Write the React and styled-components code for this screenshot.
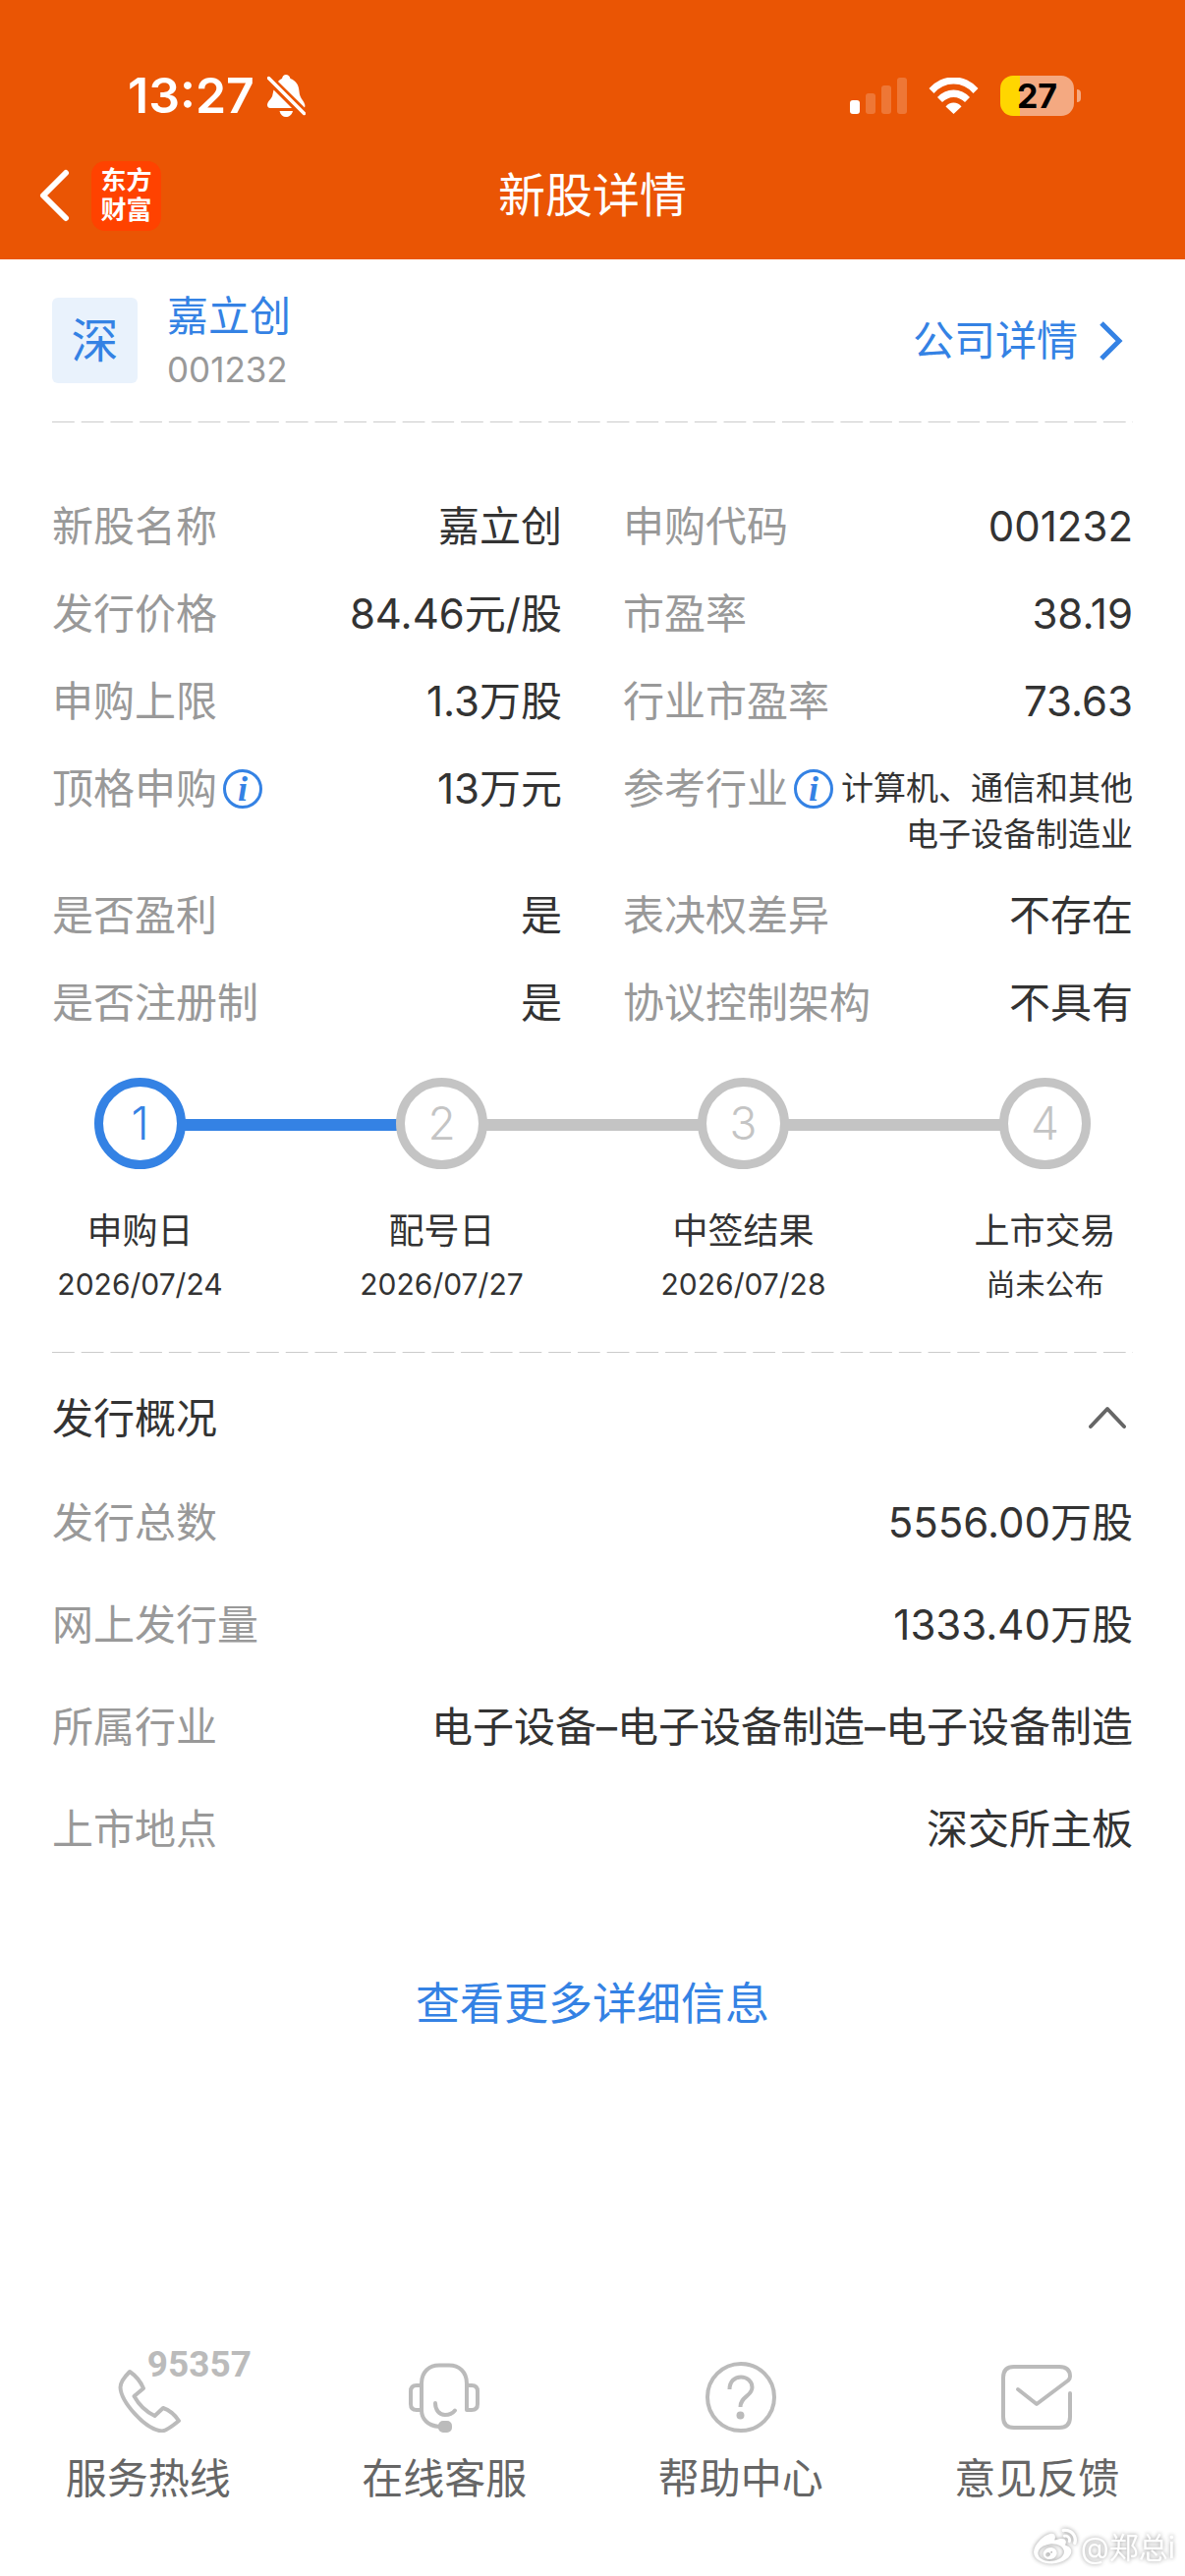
import React, { useState } from "react";
import styled, { createGlobalStyle } from "styled-components";
import { FaWeibo } from "react-icons/fa";

const GlobalStyle = createGlobalStyle`
  body {
    margin: 0;
    background-color: #fff;
    color: #333;
    font-family: Inter, "Noto Sans CJK SC", sans-serif;
  }

  button {
    padding: 0;
    border: none;
    background: none;
    font-family: inherit;
    cursor: pointer;
  }
`;

const Page = styled.div`
  position: relative;
  display: flex;
  flex-direction: column;
  min-height: 100vh;
  overflow: hidden;
`;

const Header = styled.header`
  background-color: #ea5504;
  color: #fff;
`;

const StatusBar = styled.div`
  display: flex;
  align-items: center;
  justify-content: space-between;
  height: 74px;
  padding: 60px 106px 0 130px;
`;

const StatusGroup = styled.div`
  display: flex;
  align-items: center;
  gap: ${(props) => props.$gap}px;
`;

const Time = styled.span`
  font-size: 50px;
  line-height: 60px;
  font-weight: 600;
`;

const Battery = styled.div`
  display: flex;
  align-items: center;
  gap: 3px;
`;

const BatteryBody = styled.span`
  width: 75px;
  border-radius: 13px;
  background: linear-gradient(90deg, #ffd600 27%, #f4a981 27%);
  color: #000;
  font-size: 34px;
  line-height: 41px;
  font-weight: 700;
  text-align: center;
`;

const BatteryTip = styled.span`
  width: 4px;
  height: 13px;
  border-radius: 0 4px 4px 0;
  background-color: #f4a981;
`;

const NavBar = styled.nav`
  display: grid;
  grid-template-columns: 1fr auto 1fr;
  align-items: center;
  height: 130px;
  padding: 0 40px;
`;

const NavLeft = styled.div`
  display: flex;
  align-items: center;
  gap: 22px;
`;

const BackButton = styled.button`
  display: flex;
  color: #fff;
`;

const Logo = styled.span`
  display: flex;
  align-items: center;
  justify-content: center;
  width: 71px;
  height: 71px;
  border-radius: 14px;
  background-color: #ff4200;
  font-size: 26px;
  line-height: 30px;
  font-weight: 700;
`;

const Title = styled.h1`
  margin: 0;
  font-size: 48px;
  line-height: 60px;
  font-weight: 400;
`;

const Main = styled.main`
  padding: 0 53px;
`;

const Divider = styled.hr`
  height: 1px;
  margin: 0;
  border: none;
  background: linear-gradient(90deg, #ccc 77%, transparent 77%) 0 0 / 30px 1px;
  background-repeat: round no-repeat;
`;

const Company = styled.section`
  display: flex;
  align-items: center;
  height: 165px;
`;

const Market = styled.span`
  width: 87px;
  margin-right: 30px;
  border-radius: 6px;
  background-color: #e9f2fc;
  color: #3482e4;
  font-size: 48px;
  line-height: 87px;
  text-align: center;
`;

const CompanyText = styled.div`
  flex: 1;
  padding-top: 4px;
`;

const CompanyName = styled.h2`
  margin: 0;
  color: #3482e4;
  font-size: 42px;
  line-height: 55px;
  font-weight: 400;
`;

const CompanyCode = styled.div`
  color: #999;
  font-size: 35px;
  line-height: 55px;
`;

const CompanyLink = styled.a`
  display: flex;
  align-items: center;
  gap: 19px;
  padding-right: 9px;
  color: #3482e4;
  font-size: 42px;
  line-height: 55px;
  text-decoration: none;
`;

const Facts = styled.dl`
  display: grid;
  grid-template-columns: 1fr 1fr;
  column-gap: 62px;
  margin: 0;
  padding-top: 61px;
`;

const Fact = styled.div`
  display: flex;
  justify-content: space-between;
  padding: 14px 0;
  font-size: 42px;
  line-height: 61px;
  white-space: nowrap;
`;

const Label = styled.dt`
  display: flex;
  align-items: center;
  gap: 6px;
  height: 61px;
  color: #999;
`;

const Value = styled.dd`
  margin: 0;
  text-align: right;
`;

const SmallValue = styled(Value)`
  padding-top: 7px;
  font-size: 33px;
  line-height: 47px;
`;

const InfoButton = styled.button`
  width: 40px;
  height: 40px;
  color: #3482e4;

  && {
    border: 3px solid #3482e4;
    border-radius: 50%;
    font: italic 700 36px/34px "Liberation Serif", serif;
  }
`;

const Steps = styled.ol`
  display: flex;
  margin: 0;
  padding: 32px 43px 42px;
  list-style: none;
`;

const Step = styled.li`
  display: flex;
  flex: ${(props) => (props.$last ? "none" : "1")};
`;

const StepContent = styled.div`
  display: flex;
  flex-direction: column;
  align-items: center;
  width: 93px;
  white-space: nowrap;
`;

const StepCircle = styled.span`
  box-sizing: border-box;
  width: 93px;
  height: 93px;
  margin-bottom: 36px;
  border: 9px solid ${(props) => (props.$active ? "#3482e4" : "#c4c4c4")};
  border-radius: 50%;
  color: ${(props) => (props.$active ? "#3482e4" : "#c4c4c4")};
  font-size: 46px;
  line-height: 74px;
  font-weight: 300;
  text-align: center;
`;

const StepLine = styled.span`
  flex: 1;
  height: 12px;
  margin: 42px -1px 0;
  background-color: ${(props) => (props.$active ? "#3482e4" : "#c4c4c4")};
`;

const StepName = styled.span`
  font-size: 36px;
  line-height: 54px;
`;

const StepDate = styled.span`
  font-size: 30px;
  line-height: 54px;
`;

const SectionToggle = styled.button`
  display: flex;
  align-items: center;
  justify-content: space-between;
  width: 100%;
  height: 120px;

  && {
    padding: 12px 7px 0 0;
    color: #333;
    font-size: 42px;
    line-height: 61px;
  }
`;

const Overview = styled.dl`
  margin: 0;
`;

const OverviewRow = styled.div`
  display: flex;
  align-items: center;
  justify-content: space-between;
  height: 104px;
  font-size: 42px;
  line-height: 61px;
`;

const MoreLink = styled.a`
  display: block;
  margin: 97px auto 0;
  width: fit-content;
  color: #3482e4;
  font-size: 45px;
  line-height: 60px;
  text-decoration: none;
`;

const Footer = styled.footer`
  display: grid;
  grid-template-columns: repeat(4, 1fr);
  margin-top: auto;
  padding-bottom: 69px;
`;

const FooterLink = styled.a`
  display: flex;
  flex-direction: column;
  align-items: center;
  gap: 16px;
  color: #666;
  font-size: 42px;
  line-height: 61px;
  text-decoration: none;
`;

const FooterIcon = styled.span`
  position: relative;
  width: 72px;
  height: 72px;
  color: #bbb;

  svg {
    display: block;
  }
`;

const Hotline = styled.span`
  position: absolute;
  top: -16px;
  left: 35px;
  font-family: Roboto, sans-serif;
  font-size: 37px;
  line-height: 37px;
  font-weight: 700;
`;

const Watermark = styled.div`
  position: absolute;
  right: 10px;
  bottom: 7px;
  display: flex;
  align-items: center;
  gap: 4px;
  color: #fff;
  font-size: 30px;
  line-height: 44px;
  filter: drop-shadow(0 0 2px #999);
`;

const facts = [
  { label: "新股名称", value: "嘉立创" },
  { label: "申购代码", value: "001232" },
  { label: "发行价格", value: "84.46元/股" },
  { label: "市盈率", value: "38.19" },
  { label: "申购上限", value: "1.3万股" },
  { label: "行业市盈率", value: "73.63" },
  { label: "顶格申购", value: "13万元", info: true },
  {
    label: "参考行业",
    value: ["计算机、通信和其他", "电子设备制造业"],
    info: true,
  },
  { label: "是否盈利", value: "是" },
  { label: "表决权差异", value: "不存在" },
  { label: "是否注册制", value: "是" },
  { label: "协议控制架构", value: "不具有" },
];

const steps = [
  { name: "申购日", date: "2026/07/24", active: true },
  { name: "配号日", date: "2026/07/27" },
  { name: "中签结果", date: "2026/07/28" },
  { name: "上市交易", date: "尚未公布" },
];

const overview = [
  { label: "发行总数", value: "5556.00万股" },
  { label: "网上发行量", value: "1333.40万股" },
  { label: "所属行业", value: "电子设备–电子设备制造–电子设备制造" },
  { label: "上市地点", value: "深交所主板" },
];

const BellOffIcon = () => (
  <svg width="39" height="43" viewBox="0 0 39 43" fill="currentColor">
    <path d="M11 7C12 5.500 13.500 4.500 15 4C15.500 1.500 17 0 19 0C21 0 23 1.500 23.500 4C29 6 32 10 32.500 17C33 24 37 26 38 30C38.500 31 38.500 32 38 33.500Z" />
    <path d="M6.500 15.500L25 34H3C1 34 0 32.500 0 30.500C0.500 26 5 25 5.500 20Z" />
    <path d="M12.500 37H26C25 41 22 43 19 43C16 43 13.500 41 12.500 37Z" />
    <path d="M1.500 3.500L37.500 39.500" stroke="currentColor" strokeWidth="3.500" strokeLinecap="round" />
  </svg>
);

const SignalIcon = () => (
  <svg width="58" height="37" viewBox="0 0 58 37" fill="currentColor">
    <rect x="0" y="23" width="10" height="14" rx="3" />
    <g opacity="0.2">
      <rect x="16" y="16" width="10" height="21" rx="3" />
      <rect x="32" y="8" width="10" height="29" rx="3" />
      <rect x="48" y="0" width="10" height="37" rx="3" />
    </g>
  </svg>
);

const WifiIcon = () => (
  <svg width="51" height="37" viewBox="0 0 51 37" fill="currentColor">
    <path d="M.5 11A32.800 32.800 0 0 1 50.500 11L45.500 16A26 26 0 0 0 5.500 16Z" />
    <path d="M9 20A22 22 0 0 1 42 20L37 25A16 16 0 0 0 14 25Z" />
    <path d="M17.500 29.500A10 10 0 0 1 33.500 29.500L25.500 37Z" />
  </svg>
);

const PhoneIcon = () => (
  <path d="M17 10C13 14 7.500 20 7.500 26C8 40 32 69 50 70.500C54 70 61 65 67 60C63 54 57 49 51 47L42.500 55C34 51 26 43 21.500 35L31 27C28 20 23 14 17 10Z" />
);

const HeadsetIcon = () => (
  <>
    <path d="M13 24V22C13 10 21 3.500 31 3.500H41C51 3.500 59 10 59 22V49H64Q70 49 70 43V30Q70 24 64 24H59" />
    <path d="M13 24H8Q2 24 2 30V43Q2 49 8 49H13M13 24V49C13 58 19 65 31 66" />
    <path d="M27 42C27 49 31 54 37 54C42 54 45 52 47 49.500" />
    <rect x="32" y="62" width="10" height="8" rx="3" fill="currentColor" />
  </>
);

const HelpIcon = () => (
  <>
    <circle cx="36" cy="36" r="34" />
    <path d="M24.500 28C24.500 20 29.500 15.500 36 15.500C42.500 15.500 47.500 20 47.500 26C47.500 35 35.500 35 35.500 46" strokeLinecap="butt" />
    <circle cx="35.500" cy="54.500" r="2" fill="currentColor" />
  </>
);

const FeedbackIcon = () => (
  <path d="M70 32V56Q70 67 59 67H13Q2 67 2 56V16Q2 5 13 5H59Q70 5 70 15Q70 17 68 19L36 43L17 28" />
);

const footerLinks = [
  { text: "服务热线", Icon: PhoneIcon, hotline: "95357" },
  { text: "在线客服", Icon: HeadsetIcon },
  { text: "帮助中心", Icon: HelpIcon },
  { text: "意见反馈", Icon: FeedbackIcon },
];

const App = () => {
  const [open, setOpen] = useState(true);

  const handleToggle = () => {
    setOpen(!open);
  };

  return (
    <Page>
      <GlobalStyle />
      <Header>
        <StatusBar>
          <StatusGroup $gap={13}>
            <Time>13:27</Time>
            <BellOffIcon />
          </StatusGroup>
          <StatusGroup $gap={22}>
            <SignalIcon />
            <WifiIcon />
            <Battery>
              <BatteryBody>27</BatteryBody>
              <BatteryTip />
            </Battery>
          </StatusGroup>
        </StatusBar>
        <NavBar>
          <NavLeft>
            <BackButton aria-label="返回">
              <svg width="31" height="54" viewBox="0 0 31 54" fill="none" stroke="currentColor" strokeWidth="6" strokeLinecap="round" strokeLinejoin="round">
                <path d="M27 4L4 27L27 50" />
              </svg>
            </BackButton>
            <Logo>
              东方
              <br />
              财富
            </Logo>
          </NavLeft>
          <Title>新股详情</Title>
        </NavBar>
      </Header>

      <Main>
        <Company>
          <Market>深</Market>
          <CompanyText>
            <CompanyName>嘉立创</CompanyName>
            <CompanyCode>001232</CompanyCode>
          </CompanyText>
          <CompanyLink href="#company">
            公司详情
            <svg width="28" height="40" viewBox="0 0 28 40" fill="none" stroke="currentColor" strokeWidth="5">
              <path d="M5 2L23 20L5 38" />
            </svg>
          </CompanyLink>
        </Company>
        <Divider />

        <Facts>
          {facts.map(({ label, value, info }) => (
            <Fact key={label}>
              <Label>
                {label}
                {info && <InfoButton aria-label={`${label}说明`}>i</InfoButton>}
              </Label>
              {Array.isArray(value) ? (
                <SmallValue>
                  {value[0]}
                  <br />
                  {value[1]}
                </SmallValue>
              ) : (
                <Value>{value}</Value>
              )}
            </Fact>
          ))}
        </Facts>

        <Steps>
          {steps.map(({ name, date, active }, index) => (
            <Step key={name} $last={index === steps.length - 1}>
              <StepContent>
                <StepCircle $active={active}>{index + 1}</StepCircle>
                <StepName>{name}</StepName>
                <StepDate>{date}</StepDate>
              </StepContent>
              {index < steps.length - 1 && <StepLine $active={active} />}
            </Step>
          ))}
        </Steps>
        <Divider />

        <SectionToggle onClick={handleToggle} aria-expanded={open}>
          发行概况
          <svg width="38" height="24" viewBox="0 0 38 24" fill="none" stroke="#666" strokeWidth="4" strokeLinecap="round" strokeLinejoin="round">
            <path d={open ? "M2 21L19 3L36 21" : "M2 3L19 21L36 3"} />
          </svg>
        </SectionToggle>
        {open && (
          <Overview>
            {overview.map(({ label, value }) => (
              <OverviewRow key={label}>
                <Label>{label}</Label>
                <Value>{value}</Value>
              </OverviewRow>
            ))}
          </Overview>
        )}

        <MoreLink href="#more">查看更多详细信息</MoreLink>
      </Main>

      <Footer>
        {footerLinks.map(({ text, Icon, hotline }) => (
          <FooterLink key={text} href="#service">
            <FooterIcon>
              <svg width="72" height="72" viewBox="0 0 72 72" fill="none" stroke="currentColor" strokeWidth="4" strokeLinecap="round" strokeLinejoin="round">
                <Icon />
              </svg>
              {hotline && <Hotline>{hotline}</Hotline>}
            </FooterIcon>
            {text}
          </FooterLink>
        ))}
      </Footer>

      <Watermark>
        <FaWeibo size={44} />
        @郑总i
      </Watermark>
    </Page>
  );
};

export default App;
